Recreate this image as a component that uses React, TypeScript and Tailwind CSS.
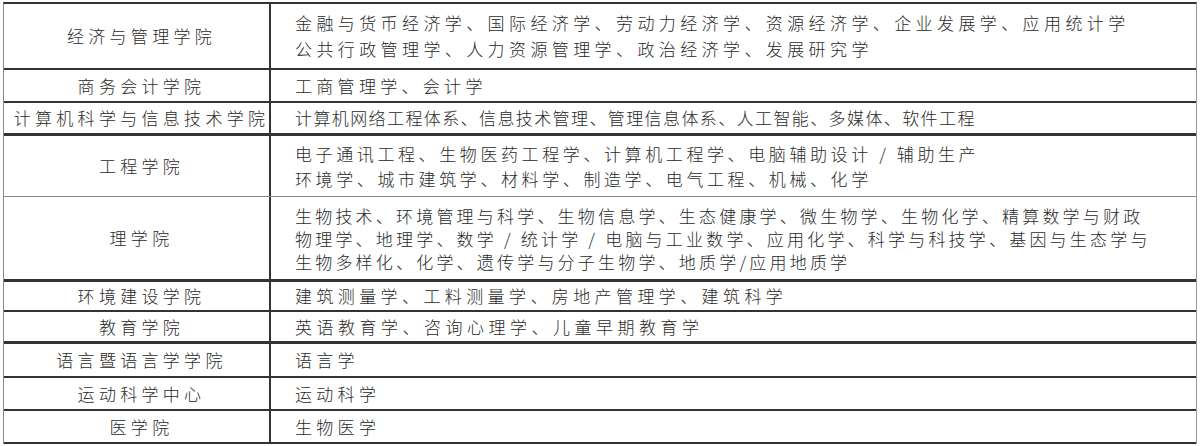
import React from "react";

type Row = {
  school: string;
  majors: string[];
  h: string;
  line: string;
  track: string;
  lh: string;
};

const rows: Row[] = [
  {
    school: "经济与管理学院",
    majors: [
      "金融与货币经济学、国际经济学、劳动力经济学、资源经济学、企业发展学、应用统计学",
      "公共行政管理学、人力资源管理学、政治经济学、发展研究学",
    ],
    h: "h-[66px]",
    line: "border-b-2 border-[#333]",
    track: "tracking-[4.4px]",
    lh: "leading-[26px]",
  },
  {
    school: "商务会计学院",
    majors: ["工商管理学、会计学"],
    h: "h-[33px]",
    line: "border-b-2 border-[#333]",
    track: "tracking-[4.3px]",
    lh: "leading-[26px]",
  },
  {
    school: "计算机科学与信息技术学院",
    majors: ["计算机网络工程体系、信息技术管理、管理信息体系、人工智能、多媒体、软件工程"],
    h: "h-[33px]",
    line: "border-b-[3px] border-[#333]",
    track: "tracking-[1.4px]",
    lh: "leading-[26px]",
  },
  {
    school: "工程学院",
    majors: [
      "电子通讯工程、生物医药工程学、计算机工程学、电脑辅助设计 / 辅助生产",
      "环境学、城市建筑学、材料学、制造学、电气工程、机械、化学",
    ],
    h: "h-[61px]",
    line: "border-b border-[#888]",
    track: "tracking-[3.6px]",
    lh: "leading-[25px]",
  },
  {
    school: "理学院",
    majors: [
      "生物技术、环境管理与科学、生物信息学、生态健康学、微生物学、生物化学、精算数学与财政",
      "物理学、地理学、数学 / 统计学 / 电脑与工业数学、应用化学、科学与科技学、基因与生态学与",
      "生物多样化、化学、遗传学与分子生物学、地质学/应用地质学",
    ],
    h: "h-[85px]",
    line: "border-b-[3px] border-[#333]",
    track: "tracking-[3.2px]",
    lh: "leading-[23px]",
  },
  {
    school: "环境建设学院",
    majors: ["建筑测量学、工料测量学、房地产管理学、建筑科学"],
    h: "h-[30px]",
    line: "border-b-2 border-[#333]",
    track: "tracking-[4.4px]",
    lh: "leading-[26px]",
  },
  {
    school: "教育学院",
    majors: ["英语教育学、咨询心理学、儿童早期教育学"],
    h: "h-[32px]",
    line: "border-b-[3px] border-[#333]",
    track: "tracking-[4.5px]",
    lh: "leading-[26px]",
  },
  {
    school: "语言暨语言学学院",
    majors: ["语言学"],
    h: "h-[34px]",
    line: "border-b-2 border-[#333]",
    track: "tracking-[4.3px]",
    lh: "leading-[26px]",
  },
  {
    school: "运动科学中心",
    majors: ["运动科学"],
    h: "h-[33px]",
    line: "border-b-2 border-[#333]",
    track: "tracking-[4.3px]",
    lh: "leading-[26px]",
  },
  {
    school: "医学院",
    majors: ["生物医学"],
    h: "h-[33px]",
    line: "border-b-2 border-[#333]",
    track: "tracking-[4.3px]",
    lh: "leading-[26px]",
  },
];

export default function App() {
  return (
    <div
      className="w-[1200px] h-[446px] bg-white pt-[2px] pl-[3px] text-[#2a2a2a] font-light"
      style={{ fontFamily: '"Noto Sans CJK SC", sans-serif' }}
    >
      <div className="w-[1194px] border-t-2 border-t-[#333] border-l border-l-[#888] border-r border-r-[#999]">
        {rows.map((r) => (
          <div key={r.school} className={`flex ${r.h} ${r.line}`}>
            <div className="w-[267px] shrink-0 flex items-center justify-center pl-[6px] text-[17px] tracking-[4.3px] whitespace-nowrap border-r-2 border-[#333]">
              <span className="mr-[-4px]">{r.school}</span>
            </div>
            <div
              className={`flex-1 flex flex-col justify-center pl-[24px] text-[17px] ${r.track} ${r.lh} whitespace-nowrap`}
            >
              {r.majors.map((m) => (
                <div key={m}>{m}</div>
              ))}
            </div>
          </div>
        ))}
      </div>
    </div>
  );
}
